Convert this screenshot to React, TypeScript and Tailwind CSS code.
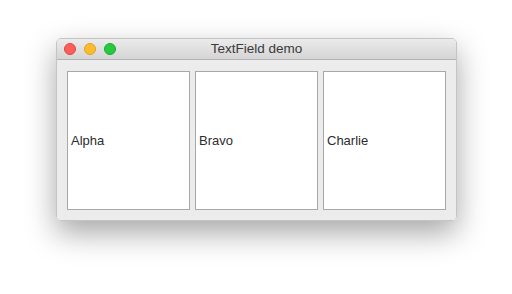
import React from 'react'

const fields = ["Alpha", "Bravo", "Charlie"];

const Light = ({ color, ring }: { color: string; ring: string }) => (
  <span className={`block h-[12px] w-[12px] rounded-full border ${color} ${ring}`} />
);

export default function App() {
  return (
    <div className="h-[294px] w-[512px] bg-white pl-[56px] pt-[38px]" style={{ fontFamily: '"Helvetica Neue", "Liberation Sans", Arial, sans-serif' }}>
      <div className="flex w-[401px] flex-col overflow-hidden rounded-[5px] border border-[#c4c4c4] shadow-[0_12px_30px_rgba(0,0,0,0.35)]">
        <div className="relative flex h-[21px] items-center border-b border-[#b3b3b3] bg-gradient-to-b from-[#ebebeb] to-[#d5d5d5] pl-[7px]">
          <div className="flex gap-[8px]">
            <Light color="bg-[#fc5f57]" ring="border-[#e0443e]" />
            <Light color="bg-[#fdbc2e]" ring="border-[#dea123]" />
            <Light color="bg-[#28c840]" ring="border-[#1aab29]" />
          </div>
          <span className="absolute inset-x-0 text-center text-[13.5px] text-[#3a3a3a]">TextField demo</span>
        </div>
        <div className="flex h-[160px] gap-[5px] bg-[#ececec] px-[10px] pb-[10px] pt-[11px]">
          {fields.map((f) => (
            <div key={f} className="flex flex-1 items-center border border-[#a8a8a8] bg-white pl-[3px] text-[13px] text-[#2c2c2c]">
              {f}
            </div>
          ))}
        </div>
      </div>
    </div>
  );
}
